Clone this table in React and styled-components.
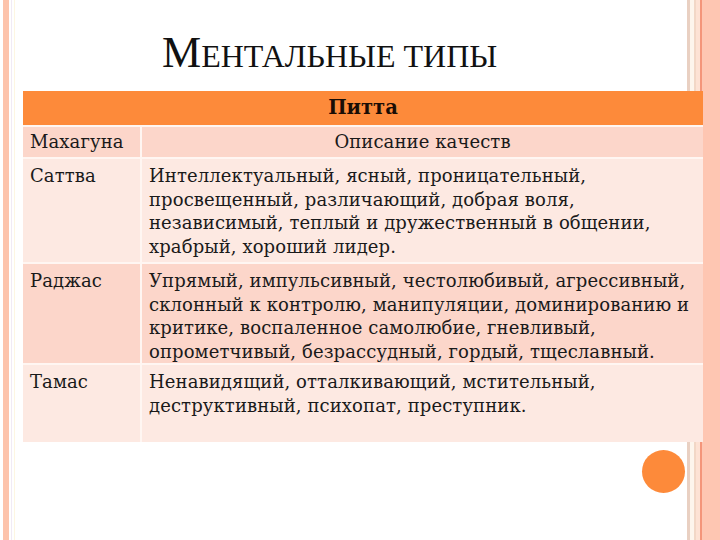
import React from "react";
import styled, { createGlobalStyle } from "styled-components";

const Global = createGlobalStyle`
  html, body { margin: 0; padding: 0; background: #fff; }
  #root { width: 720px; height: 540px; }
`;

const Slide = styled.div`
  position: relative;
  width: 720px;
  height: 540px;
  overflow: hidden;
  box-sizing: border-box;
  padding: 0 17px 0 23px;
  display: flex;
  flex-direction: column;
  background: linear-gradient(
    to right,
    #ffffff 0px, #ffffff 3px,
    #fdc3ab 3px, #fdc3ab 9px,
    #ffffff 9px, #ffffff 11px,
    #f1eaf5 11px, #f1eaf5 12px,
    #ffffff 12px, #ffffff 14px,
    #fdf6e2 14px, #fdf6e2 15px,
    #ffffff 15px, #ffffff 687px,
    #e9d0c2 687px, #e9d0c2 690px,
    #fdf5ec 690px, #fdf5ec 694px,
    #f2d7c6 694px, #f2d7c6 696px,
    #fde2d4 696px, #fde2d4 700px,
    #f4957a 700px, #f4957a 702px,
    #fec6b2 702px, #fec6b2 720px
  );
`;

const Title = styled.h1`
  margin: 0;
  height: 91px;
  box-sizing: border-box;
  padding: 31px 0 0 139px;
  font-family: "Liberation Serif", "DejaVu Serif", serif;
  font-weight: normal;
  color: #111;
  line-height: 44px;
  white-space: nowrap;
`;

const Cap = styled.span`
  font-size: ${(p) => p.$size}px;
`;

const Table = styled.div`
  display: grid;
  grid-template-columns: 117px 1fr;
  column-gap: 2px;
  row-gap: 2px;
  background: #fff6f2;
  font-family: "DejaVu Serif", "Liberation Serif", serif;
  color: #1a1a1a;
`;

const Header = styled.div`
  grid-column: 1 / span 2;
  height: 34px;
  background: #fd8a3a;
  font-weight: bold;
  font-size: 19.5px;
  text-align: center;
  line-height: 33px;
  color: #1a0d05;
`;

const Cell = styled.div`
  background: ${(p) => (p.$alt ? "#fcd6ca" : "#fde9e2")};
  box-sizing: border-box;
  min-height: ${(p) => p.$h}px;
  padding: ${(p) => (p.$head ? "3px 7px 0" : "5px 7px 0")};
  font-size: 18px;
  letter-spacing: 0.1px;
  line-height: 23.5px;
  text-align: ${(p) => (p.$center ? "center" : "left")};
  white-space: nowrap;
`;

const Dot = styled.div`
  position: absolute;
  left: 642px;
  top: 450px;
  width: 43px;
  height: 43px;
  border-radius: 50%;
  background: #fd8a3a;
`;

const rows = [
  {
    name: "Саттва",
    h: 103,
    alt: false,
    lines: [
      "Интеллектуальный, ясный, проницательный,",
      "просвещенный, различающий, добрая воля,",
      "независимый, теплый и дружественный в общении,",
      "храбрый, хороший лидер.",
    ],
  },
  {
    name: "Раджас",
    h: 99,
    alt: true,
    lines: [
      "Упрямый, импульсивный, честолюбивый, агрессивный,",
      "склонный к контролю, манипуляции, доминированию и",
      "критике, воспаленное самолюбие, гневливый,",
      "опрометчивый, безрассудный, гордый, тщеславный.",
    ],
  },
  {
    name: "Тамас",
    h: 77,
    alt: false,
    lines: [
      "Ненавидящий, отталкивающий, мстительный,",
      "деструктивный, психопат, преступник.",
    ],
  },
];

export default function App() {
  return (
    <>
      <Global />
      <Slide>
        <Title>
          <Cap $size={44}>М</Cap>
          <Cap $size={32}>ЕНТАЛЬНЫЕ ТИПЫ</Cap>
        </Title>
        <Table>
          <Header>Питта</Header>
          <Cell $alt $head $h={30}>Махагуна</Cell>
          <Cell $alt $head $center $h={30}>Описание качеств</Cell>
          {rows.map((r) => (
            <React.Fragment key={r.name}>
              <Cell $alt={r.alt} $h={r.h}>{r.name}</Cell>
              <Cell $alt={r.alt} $h={r.h}>
                {r.lines.map((l, i) => (
                  <div key={i}>{l}</div>
                ))}
              </Cell>
            </React.Fragment>
          ))}
        </Table>
        <Dot />
      </Slide>
    </>
  );
}
